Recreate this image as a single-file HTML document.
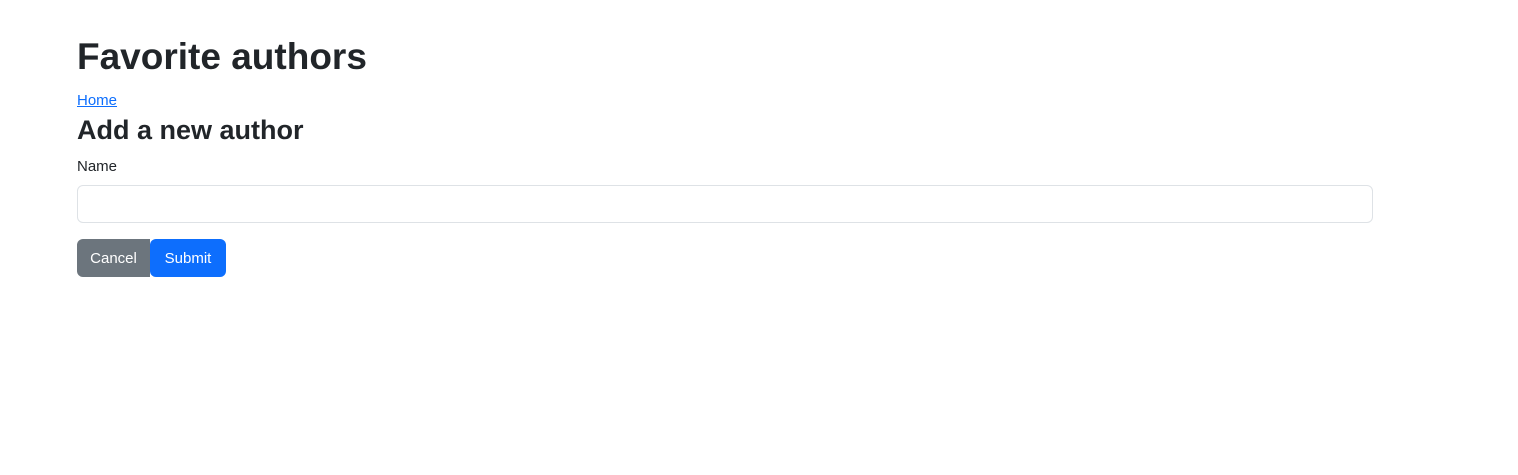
<!DOCTYPE html>
<html><head><style>
body{margin:0;background:#fff;font-family:"Liberation Sans",sans-serif;color:#212529;}
.a{position:absolute;left:77px;white-space:nowrap;}
h1{margin:0;font-size:37px;font-weight:bold;line-height:48px;top:33px;}
a{color:#0d6efd;font-size:15px;line-height:24px;top:89px;}
h2{margin:0;font-size:27px;font-weight:bold;line-height:34px;top:113px;}
.l{font-size:15px;line-height:24px;top:155px;}
.in{top:185px;width:1294px;height:36px;border:1px solid #dee2e6;border-radius:6px;}
.b{top:239px;height:38px;line-height:40px;color:#fff;font-size:15px;text-align:center;border-radius:6px;}
</style></head><body>
<h1 class="a">Favorite authors</h1>
<a class="a" href="#">Home</a>
<h2 class="a">Add a new author</h2>
<div class="a l">Name</div>
<div class="a in"></div>
<div class="a b" style="width:73px;background:#6c757d;border-radius:6px 0 0 6px;">Cancel</div>
<div class="a b" style="left:150px;width:76px;background:#0d6efd;">Submit</div>
</body></html>
